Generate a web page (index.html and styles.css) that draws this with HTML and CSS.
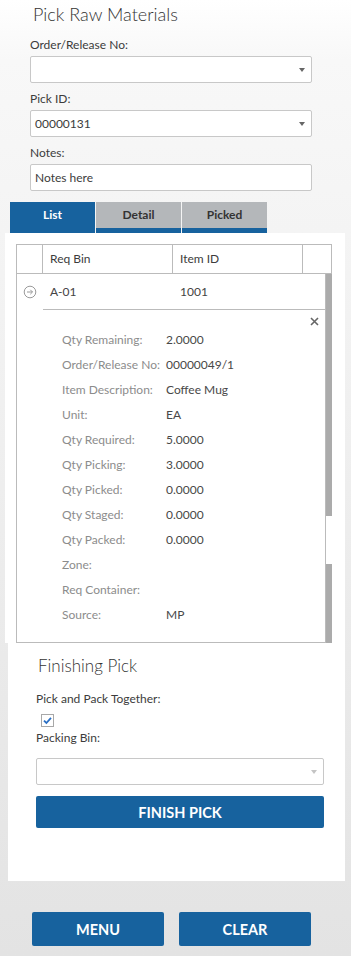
FILE: index.html
```html
<!DOCTYPE html>
<html lang="en">
<head>
  <meta charset="UTF-8">
  <title>Pick Raw Materials</title>
  <link rel="stylesheet" href="styles.css">
</head>
<body>

<section class="head">
  <h1 class="title">Pick Raw Materials</h1>
  <div class="field">
    <label>Order/Release No:</label>
    <div class="select"><span></span><i class="caret"></i></div>
  </div>
  <div class="field">
    <label>Pick ID:</label>
    <div class="select"><span>00000131</span><i class="caret"></i></div>
  </div>
  <div class="field">
    <label>Notes:</label>
    <div class="text-input">Notes here</div>
  </div>
</section>

<nav class="tabs">
  <div class="tab active">List</div>
  <div class="tab">Detail</div>
  <div class="tab">Picked</div>
</nav>

<section class="panel list-panel">
  <div class="grid">
    <div class="grid-head">
      <div class="cell icon-col"></div>
      <div class="cell bin-col">Req Bin</div>
      <div class="cell item-col">Item ID</div>
      <div class="cell end-col"></div>
    </div>
    <div class="grid-body">
      <div class="rows">
        <div class="row">
          <div class="icon-col">
            <svg width="14" height="14" viewBox="0 0 14 14">
              <circle cx="7" cy="7" r="5.8" fill="none" stroke="#9a9a9a" stroke-width="1"/>
              <path d="M4 7h5.5M7.3 4.8 9.5 7 7.3 9.2" fill="none" stroke="#9a9a9a" stroke-width="1"/>
            </svg>
          </div>
          <div class="row-cells">
            <div class="bin-col">A-01</div>
            <div class="item-col">1001</div>
          </div>
        </div>
        <div class="detail">
          <span class="close">
            <svg width="9" height="9" viewBox="0 0 9 9">
              <path d="M1 1 8 8M8 1 1 8" stroke="#666" stroke-width="1.6"/>
            </svg>
          </span>
          <dl>
            <div><dt>Qty Remaining:</dt><dd>2.0000</dd></div>
            <div><dt>Order/Release No:</dt><dd>00000049/1</dd></div>
            <div><dt>Item Description:</dt><dd>Coffee Mug</dd></div>
            <div><dt>Unit:</dt><dd>EA</dd></div>
            <div><dt>Qty Required:</dt><dd>5.0000</dd></div>
            <div><dt>Qty Picking:</dt><dd>3.0000</dd></div>
            <div><dt>Qty Picked:</dt><dd>0.0000</dd></div>
            <div><dt>Qty Staged:</dt><dd>0.0000</dd></div>
            <div><dt>Qty Packed:</dt><dd>0.0000</dd></div>
            <div><dt>Zone:</dt><dd></dd></div>
            <div><dt>Req Container:</dt><dd></dd></div>
            <div><dt>Source:</dt><dd>MP</dd></div>
          </dl>
        </div>
      </div>
      <div class="scrollbar">
        <div class="thumb top"></div>
        <div class="gap"></div>
        <div class="thumb bottom"></div>
      </div>
    </div>
  </div>
</section>

<section class="panel finish">
  <h2>Finishing Pick</h2>
  <label>Pick and Pack Together:</label>
  <div class="check">
    <svg width="13" height="13" viewBox="0 0 13 13">
      <rect x="0.5" y="0.5" width="12" height="12" fill="#fff" stroke="#a8a8a8"/>
      <path d="M3 6.6 5.4 9 10 3.8" fill="none" stroke="#2a6fc4" stroke-width="1.8"/>
    </svg>
  </div>
  <label class="bin-label">Packing Bin:</label>
  <div class="select disabled"><span></span><i class="caret"></i></div>
  <button class="btn wide">FINISH PICK</button>
</section>

<div class="actions">
  <button class="btn">MENU</button>
  <button class="btn">CLEAR</button>
</div>

</body>
</html>
```

FILE: styles.css
```css
body {
  margin: 0;
  padding: 0;
  min-height: 956px;
  background: linear-gradient(to bottom, #ffffff 0, #f8f8f8 60px, #e3e3e3 100%);
  font-family: Lato, 'Open Sans', 'Liberation Sans', sans-serif;
  font-size: 12px;
  color: #3c3c3c;
}
.head {
  padding: 2px 39px 0 30px;
}
.title {
  margin: 0 0 11px 3px;
  font-size: 18px;
  font-weight: 300;
  line-height: 24px;
  color: #333;
}
.field {
  margin-top: 8px;
}
.field:first-of-type {
  margin-top: 0;
}
label {
  display: block;
  line-height: 16px;
  margin-bottom: 3px;
  color: #3c3c3c;
}
.select, .text-input {
  box-sizing: border-box;
  height: 27px;
  background: #fff;
  border: 1px solid #c8c8c8;
  border-radius: 2px;
  display: flex;
  align-items: center;
  justify-content: space-between;
  padding: 0 6px 0 4px;
  color: #3c3c3c;
}
.caret {
  width: 0;
  height: 0;
  border-left: 3.5px solid transparent;
  border-right: 3.5px solid transparent;
  border-top: 4px solid #666;
}
.select.disabled .caret {
  border-top-color: #c4c4c4;
}
.tabs {
  display: flex;
  gap: 1px;
  margin: 11px 0 0 10px;
}
.tab {
  box-sizing: border-box;
  width: 85px;
  height: 31px;
  padding-top: 5px;
  text-align: center;
  font-weight: 700;
  background: #b4b7ba;
  border-bottom: 5px solid #17629e;
  color: #333;
}
.tab.active {
  background: #17629e;
  color: #fff;
}
.panel {
  background: #fff;
}
.list-panel {
  margin-left: 5px;
  width: 340px;
  box-sizing: border-box;
  padding: 11px 13px 0 11px;
}
.grid {
  border-left: 1px solid #bbb;
  border-top: 1px solid #bbb;
}
.grid-head {
  display: flex;
  height: 28px;
  border-bottom: 1px solid #bbb;
}
.grid-head .cell {
  box-sizing: border-box;
  border-right: 1px solid #bbb;
  line-height: 28px;
  padding-left: 7px;
}
.icon-col {
  width: 26px;
  flex: none;
}
.grid-head .bin-col {
  width: 130px;
}
.grid-head .item-col {
  width: 130px;
}
.grid-head .end-col {
  width: 29px;
}
.grid-body {
  display: flex;
}
.rows {
  flex: 1;
  border-right: 1px solid #bbb;
  border-bottom: 1px solid #bbb;
}
.row {
  display: flex;
  height: 36px;
}
.row .icon-col {
  display: flex;
  align-items: center;
  padding-left: 6px;
  box-sizing: border-box;
}
.row-cells {
  flex: 1;
  display: flex;
  align-items: center;
  border-bottom: 1px solid #bbb;
  color: #444;
}
.row-cells .bin-col {
  width: 130px;
  padding-left: 7px;
  box-sizing: border-box;
}
.row-cells .item-col {
  padding-left: 7px;
}
.detail {
  position: relative;
  padding: 17px 0 15px 45px;
}
.close {
  position: absolute;
  top: 7px;
  right: 6px;
  line-height: 0;
}
dl {
  margin: 0;
}
dl div {
  display: flex;
  height: 25px;
  align-items: center;
}
dt {
  width: 104px;
  color: #8c8c8c;
}
dd {
  margin: 0;
  color: #484848;
}
.scrollbar {
  width: 6px;
  display: flex;
  flex-direction: column;
}
.thumb {
  background: #ababab;
}
.thumb.top {
  height: 242px;
}
.gap {
  height: 48px;
  background: #fff;
}
.thumb.bottom {
  flex: 1;
}
.finish {
  margin-left: 8px;
  width: 337px;
  box-sizing: border-box;
  padding: 12px 21px 53px 28px;
}
.finish h2 {
  margin: 0 0 14px 2px;
  font-size: 17px;
  font-weight: 300;
  line-height: 22px;
  color: #333;
}
.finish label {
  margin-bottom: 7px;
}
.check {
  margin-left: 5px;
  height: 13px;
  line-height: 0;
}
.finish .bin-label {
  margin-top: 3px;
  margin-bottom: 12px;
}
.btn {
  border: none;
  border-radius: 2px;
  background: #17629e;
  color: #fff;
  font-family: Lato, 'Open Sans', 'Liberation Sans', sans-serif;
  font-size: 14.5px;
  font-weight: 700;
  cursor: pointer;
}
.btn.wide {
  display: block;
  width: 100%;
  height: 32px;
  margin-top: 11px;
}
.actions {
  display: flex;
  gap: 15px;
  margin: 31px 0 0 32px;
}
.actions .btn {
  width: 132px;
  height: 34px;
}
```
